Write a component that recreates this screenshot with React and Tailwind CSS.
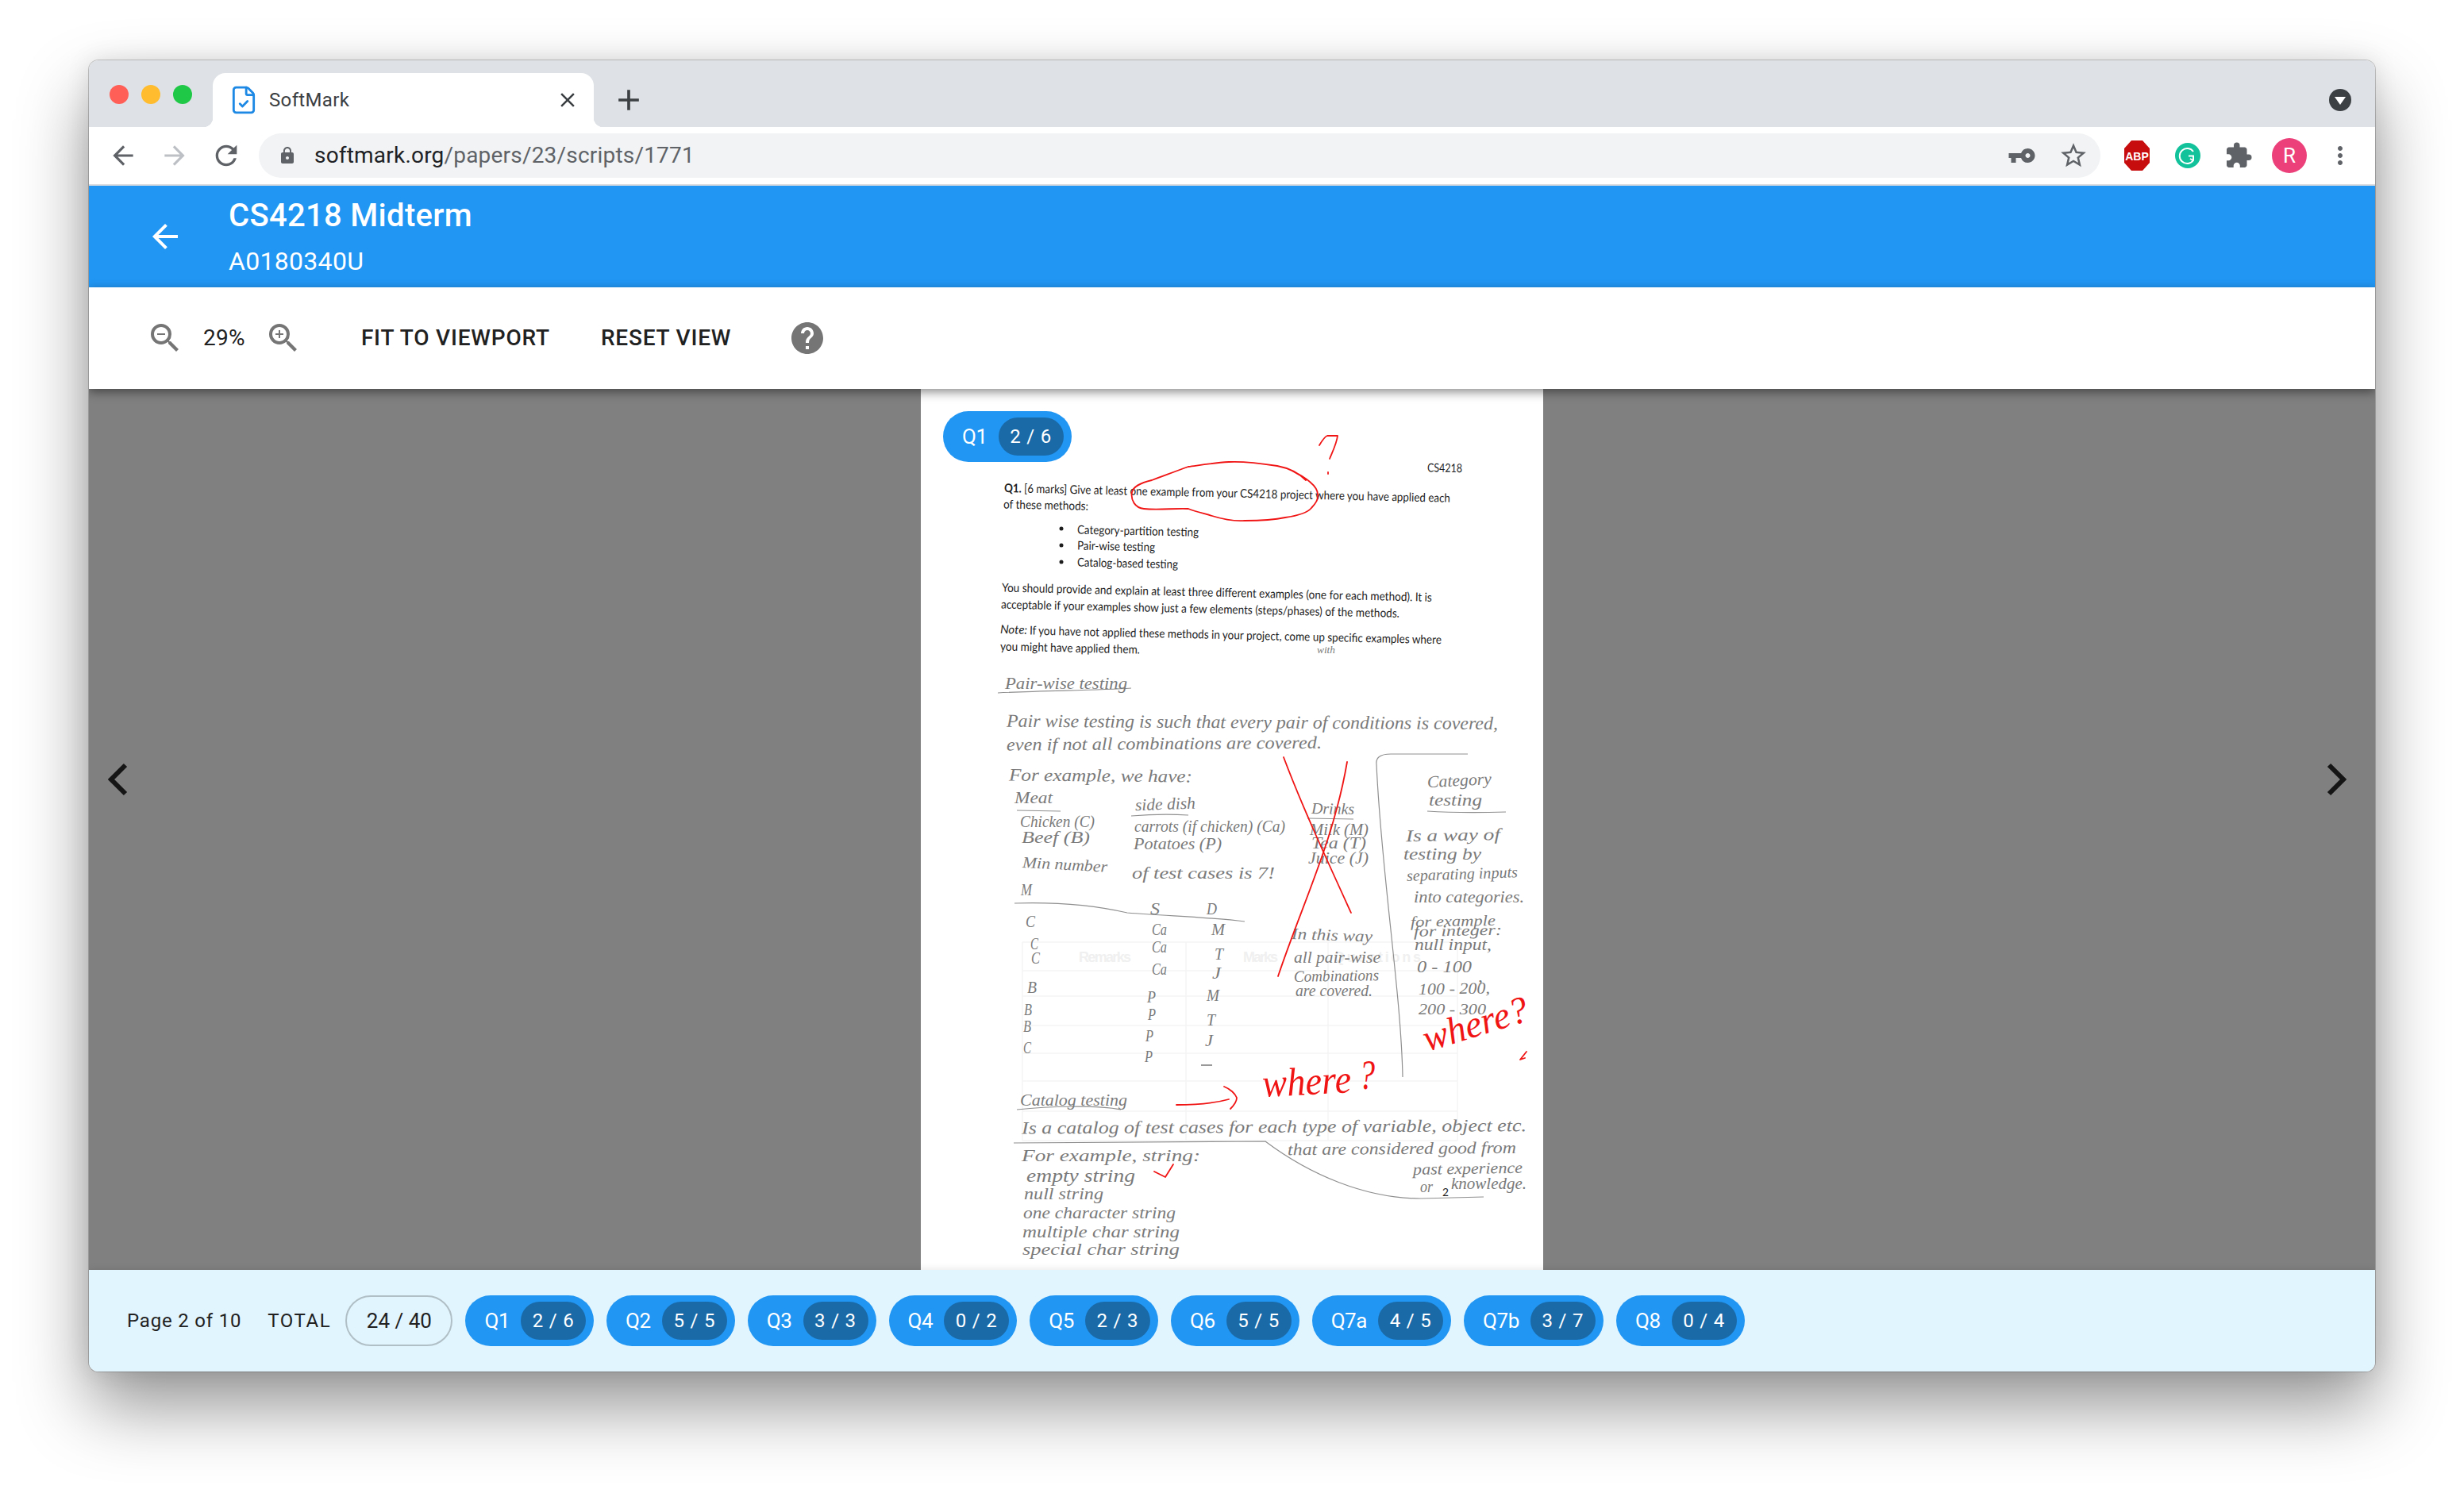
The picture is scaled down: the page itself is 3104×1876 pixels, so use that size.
import { FileCheck } from "lucide-react";
import {
  MdAdd,
  MdArrowBack,
  MdArrowForward,
  MdClose,
  MdExtension,
  MdHelp,
  MdLock,
  MdMoreVert,
  MdRefresh,
  MdStarBorder,
  MdVpnKey,
  MdZoomIn,
  MdZoomOut,
} from "react-icons/md";

const questions = [
  ["Q1", "2 / 6"],
  ["Q2", "5 / 5"],
  ["Q3", "3 / 3"],
  ["Q4", "0 / 2"],
  ["Q5", "2 / 3"],
  ["Q6", "5 / 5"],
  ["Q7a", "4 / 5"],
  ["Q7b", "3 / 7"],
  ["Q8", "0 / 4"],
];

// printed lines of the scan: text, x1, x2, y centre, size, slope
const printed = [
  ["CS4218", 1798, 1842, 590, 15, 0.8],
  ["of these methods:", 1264, 1371, 636, 15, 1.2],
  ["Category-partition testing", 1357, 1510, 668, 15, 1.2],
  ["Pair-wise testing", 1357, 1455, 688, 15, 1.2],
  ["Catalog-based testing", 1357, 1484, 709, 15, 1.2],
  ["You should provide and explain at least three different examples (one for each method). It is", 1262, 1804, 741, 15, 1.3],
  ["acceptable if your examples show just a few elements (steps/phases) of the methods.", 1261, 1763, 762, 15, 1.3],
  ["If you have not applied these methods in your project, come up specific examples where", 1297, 1816, 795, 15, 1.3],
  ["you might have applied them.", 1260, 1436, 815, 15, 1.3],
  ["2", 1817, 1825, 1503, 14, 0],
];

// handwriting of the scan: text, x1, x2, y centre, size, slope
const written = [
  ["with", 1659, 1682, 820, 12, 0],
  ["Pair-wise testing", 1266, 1420, 863, 21, 0],
  ["Pair wise testing is such that every pair of conditions is covered,", 1268, 1887, 910, 23, 0.3],
  ["even if not all combinations are covered.", 1268, 1665, 940, 22, -0.4],
  ["For example, we have:", 1271, 1502, 978, 22, 0.5],
  ["Meat", 1278, 1326, 1007, 21, 0],
  ["side dish", 1430, 1506, 1016, 21, -2],
  ["Drinks", 1652, 1706, 1020, 20, 1],
  ["Chicken (C)", 1285, 1379, 1037, 21, 0],
  ["Beef (B)", 1287, 1373, 1057, 21, 0],
  ["carrots (if chicken) (Ca)", 1429, 1619, 1043, 20, 0],
  ["Potatoes (P)", 1428, 1539, 1065, 20, 0],
  ["Milk (M)", 1650, 1724, 1047, 20, 0],
  ["Tea (T)", 1652, 1721, 1064, 20, 0],
  ["Juice (J)", 1648, 1724, 1083, 20, 0],
  ["Min number", 1288, 1395, 1088, 20, 3],
  ["of test cases is 7!", 1426, 1606, 1102, 21, 0],
  ["M", 1286, 1300, 1123, 20, 0],
  ["S", 1449, 1461, 1147, 20, 0],
  ["D", 1520, 1533, 1147, 20, 0],
  ["C", 1292, 1304, 1162, 22, 0],
  ["Ca", 1451, 1470, 1173, 20, 0],
  ["M", 1526, 1543, 1173, 20, 0],
  ["C", 1298, 1308, 1190, 22, 0],
  ["Ca", 1451, 1470, 1195, 20, 0],
  ["T", 1530, 1541, 1204, 20, 0],
  ["C", 1299, 1310, 1208, 22, 0],
  ["Ca", 1451, 1470, 1223, 20, 0],
  ["J", 1527, 1538, 1228, 20, 0],
  ["B", 1294, 1306, 1245, 22, 0],
  ["P", 1445, 1456, 1257, 22, 0],
  ["M", 1520, 1536, 1256, 20, 0],
  ["B", 1290, 1300, 1273, 22, 0],
  ["P", 1446, 1456, 1280, 20, 0],
  ["T", 1520, 1531, 1287, 20, 0],
  ["B", 1289, 1299, 1295, 20, 0],
  ["P", 1443, 1453, 1307, 20, 0],
  ["J", 1518, 1528, 1313, 20, 0],
  ["C", 1289, 1299, 1322, 20, 0],
  ["P", 1442, 1452, 1332, 22, 0],
  ["In this way", 1627, 1729, 1178, 20, 2],
  ["all pair-wise", 1630, 1739, 1208, 20, 0],
  ["Combinations", 1630, 1737, 1232, 20, -1],
  ["are covered.", 1632, 1729, 1250, 20, 0],
  ["Category", 1798, 1879, 987, 21, -3],
  ["testing", 1800, 1867, 1010, 21, 0],
  ["Is a way of", 1771, 1890, 1055, 21, -1],
  ["testing by", 1768, 1866, 1078, 21, 0],
  ["separating inputs", 1772, 1912, 1105, 20, -2],
  ["into categories.", 1781, 1920, 1132, 20, 0],
  ["for example", 1777, 1884, 1163, 19, -1],
  ["for integer:", 1781, 1892, 1175, 19, -1],
  ["null input,", 1782, 1879, 1192, 20, 0],
  ["0 - 100", 1785, 1854, 1220, 20, 0],
  [",", 1862, 1868, 1232, 20, 0],
  ["100 - 200,", 1787, 1877, 1248, 20, -1],
  ["200 - 300", 1787, 1872, 1273, 19, 0],
  ["Catalog testing", 1285, 1420, 1388, 21, 0],
  ["Is a catalog of test cases for each type of variable, object etc.", 1287, 1923, 1423, 22, -0.3],
  ["that are considered good from", 1622, 1910, 1450, 21, -0.5],
  ["past experience", 1780, 1918, 1475, 20, -1],
  ["or", 1789, 1805, 1497, 20, 0],
  ["knowledge.", 1828, 1923, 1493, 20, 0],
  ["For example, string:", 1287, 1512, 1457, 22, 0],
  ["empty string", 1293, 1430, 1483, 23, 0],
  ["null string", 1290, 1390, 1505, 22, 0],
  ["one character string", 1289, 1481, 1529, 22, 0],
  ["multiple char string", 1288, 1486, 1553, 22, 0],
  ["special char string", 1288, 1486, 1575, 22, 0],
];

// pencil lines: underlines and the rules the student drew between answers
const pencil = [
  "M1257 873 C1310 870 1380 870 1425 867",
  "M1281 1021 L1336 1022",
  "M1425 1028 C1450 1026 1480 1026 1497 1027",
  "M1647 1031 L1705 1032",
  "M1278 1138 C1340 1136 1385 1142 1420 1150 C1470 1154 1530 1156 1568 1161",
  "M1798 1022 C1830 1024 1860 1024 1897 1023",
  "M1734 963 C1733 955 1738 950 1752 950 L1849 950",
  "M1734 963 C1740 1100 1765 1250 1767 1357",
  "M1281 1398 C1320 1394 1380 1392 1412 1398",
  "M1277 1440 L1594 1438 C1650 1480 1720 1510 1790 1510 L1869 1508",
];

const red = "#f01414";

function Printed({ line }) {
  const [text, x1, x2, y, size, slope] = line;
  return (
    <text
      x={x1}
      y={y + size * 0.3}
      fontFamily="Lato, sans-serif"
      fontSize={size}
      fill="#1d1d1d"
      textLength={x2 - x1}
      lengthAdjust="spacingAndGlyphs"
      transform={`rotate(${slope} ${x1} ${y})`}
    >
      {text}
    </text>
  );
}

function Written({ line }) {
  const [text, x1, x2, y, size, slope] = line;
  return (
    <text
      x={x1}
      y={y + size * 0.25}
      fontFamily="Liberation Serif, serif"
      fontStyle="italic"
      fontSize={size}
      fill="#7a7a7a"
      textLength={x2 - x1}
      lengthAdjust="spacingAndGlyphs"
      transform={`rotate(${slope} ${x1} ${y})`}
    >
      {text}
    </text>
  );
}

// the scanned page is a picture in the reference, so it is one svg
function ScanPage() {
  return (
    <svg viewBox="1160 490 784 1110" className="block w-[784px] h-[1110px]">
      <rect x="1160" y="490" width="784" height="1110" fill="#ffffff" />

      {/* the cover page's table showing through the paper */}
      <g stroke="#f5f5f5" strokeWidth="1.5" fill="none">
        <path d="M1288 1187 H1836 M1288 1223 H1836 M1288 1255 H1836 M1288 1292 H1836 M1288 1327 H1836 M1288 1362 H1836 M1288 1400 H1836 M1288 1437 H1836" />
        <path d="M1288 1187 V1437 M1494 1187 V1437 M1673 1187 V1437 M1836 1187 V1437" />
      </g>
      <g fontFamily="Liberation Sans, sans-serif" fontWeight="700" fontSize="18" fill="#f0f0f0">
        <text x="1359" y="1212" textLength="66">Remarks</text>
        <text x="1566" y="1212" textLength="44">Marks</text>
        <text x="1680" y="1212" textLength="110">Questions</text>
      </g>

      {printed.map((line) => (
        <Printed key={line[0]} line={line} />
      ))}
      <text
        x="1265"
        y="620"
        fontFamily="Lato, sans-serif"
        fontSize="15"
        fill="#1d1d1d"
        textLength="562"
        lengthAdjust="spacingAndGlyphs"
        transform="rotate(1.3 1265 616)"
      >
        <tspan fontWeight="700">Q1.</tspan> [6 marks] Give at least one example from your CS4218 project where you have applied each
      </text>
      <text x="1260" y="798" fontFamily="Lato, sans-serif" fontStyle="italic" fontSize="15" fill="#1d1d1d" transform="rotate(1.3 1260 794)">
        Note:
      </text>
      <circle cx="1337" cy="666" r="2.5" fill="#1d1d1d" />
      <circle cx="1337" cy="687" r="2.5" fill="#1d1d1d" />
      <circle cx="1337" cy="708" r="2.5" fill="#1d1d1d" />

      <g stroke="#8f8f8f" strokeWidth="1.2" fill="none">
        {pencil.map((d) => (
          <path key={d} d={d} />
        ))}
      </g>
      {written.map((line, i) => (
        <Written key={i} line={line} />
      ))}
      <path d="M1513 1342 H1527" stroke="#777777" strokeWidth="1.5" />

      {/* red marker */}
      <g stroke={red} strokeWidth="1.8" fill="none" strokeLinecap="round" strokeLinejoin="round">
        <path d="M1645 605 C1638 598 1625 590 1609 587 C1590 584 1570 581 1548 582 C1530 583 1512 586 1497 588 C1480 594 1465 600 1451 605 C1438 608 1428 612 1426 620 C1424 630 1430 640 1441 641 C1460 643 1480 640 1497 641 C1508 645 1517 647 1527 650 C1540 654 1555 657 1568 656 C1585 656 1605 655 1619 652 C1633 650 1647 646 1652 640 C1658 634 1661 628 1660 623 C1660 617 1656 612 1650 607 C1643 601 1636 597 1629 594" />
        <path d="M1662 561 C1665 556 1669 550 1672 549 L1685 549 C1684 558 1680 566 1675 578" />
        <path d="M1673 595 L1673 597" />
        <path d="M1617 954 C1640 1015 1670 1080 1702 1150" />
        <path d="M1697 960 C1680 1060 1640 1140 1610 1230" />
        <path d="M1482 1392 C1505 1392 1530 1390 1548 1385" />
        <path d="M1542 1369 C1550 1372 1556 1378 1558 1383 C1558 1388 1554 1393 1550 1397" />
        <path d="M1454 1476 L1468 1483 L1478 1467" />
        <path d="M1915 1335 L1923 1325 M1915 1335 L1921 1333" />
      </g>
      <g fontFamily="Liberation Serif, serif" fontStyle="italic" fill={red}>
        <text x="1591" y="1382" fontSize="50" textLength="112" lengthAdjust="spacingAndGlyphs" transform="rotate(-3 1591 1382)">
          where
        </text>
        <text x="1712" y="1372" fontSize="52" textLength="20" lengthAdjust="spacingAndGlyphs">
          ?
        </text>
        <text x="1798" y="1325" fontSize="48" textLength="136" lengthAdjust="spacingAndGlyphs" transform="rotate(-17 1798 1325)">
          where?
        </text>
      </g>
    </svg>
  );
}

function ScoreChip({ label, score }) {
  return (
    <div className="flex h-[64px] shrink-0 items-center gap-[14px] rounded-full bg-[#2196f3] pl-[24px] pr-[10px] text-white">
      <span className="text-[26px] leading-none tracking-[-0.4px]">{label}</span>
      <span className="flex h-[48px] w-[82px] items-center justify-center rounded-full bg-[#1a6aa8] text-[24px] leading-none tracking-[0.8px]">
        {score}
      </span>
    </div>
  );
}

export default function App() {
  return (
    <div className="h-[1876px] w-[3104px] overflow-hidden bg-white pl-[112px] pt-[76px] font-['Roboto',sans-serif]">
      <div className="flex h-[1652px] w-[2880px] flex-col overflow-hidden rounded-[12px] shadow-[0_0_0_1px_rgba(0,0,0,0.2),0_44px_88px_rgba(0,0,0,0.42),0_0_30px_rgba(0,0,0,0.1)]">
        {/* tab strip */}
        <div className="flex h-[84px] shrink-0 bg-[#dee1e6]">
          <div className="ml-[26px] mt-[31px] flex h-[24px] gap-[16px]">
            <span className="h-[24px] w-[24px] rounded-full bg-[#ff5f57]" />
            <span className="h-[24px] w-[24px] rounded-full bg-[#febc2e]" />
            <span className="h-[24px] w-[24px] rounded-full bg-[#1fc846]" />
          </div>
          <div className="relative ml-[26px] mt-[16px] flex h-[68px] w-[480px] items-center rounded-t-[16px] bg-white pl-[20px] pr-[18px]">
            <span className="absolute bottom-0 left-[-12px] h-[12px] w-[12px] bg-[radial-gradient(circle_at_0_0,#dee1e6_12px,#ffffff_12.5px)]" />
            <span className="absolute bottom-0 right-[-12px] h-[12px] w-[12px] bg-[radial-gradient(circle_at_100%_0,#dee1e6_12px,#ffffff_12.5px)]" />
            <FileCheck size={38} strokeWidth={1.8} className="text-[#1e88e5]" />
            <span className="ml-[13px] text-[24px] tracking-[0.35px] text-[#3c4043]">SoftMark</span>
            <MdClose size={30} className="ml-auto text-[#3c4043]" />
          </div>
          <MdAdd size={44} className="ml-[22px] mt-[28px] text-[#3c4043]" />
          <div className="ml-auto mr-[30px] mt-[36px] flex h-[28px] w-[28px] items-center justify-center rounded-full bg-[#3c4043]">
            <span className="mt-[2px] h-0 w-0 border-x-[7px] border-t-[10px] border-x-transparent border-t-white" />
          </div>
        </div>

        {/* address bar */}
        <div className="flex h-[74px] shrink-0 items-center border-b-2 border-[#dadce0] bg-white">
          <MdArrowBack size={38} className="ml-[24px] text-[#5f6368]" />
          <MdArrowForward size={38} className="ml-[27px] text-[#bdc1c6]" />
          <MdRefresh size={40} className="ml-[26px] text-[#5f6368]" />
          <div className="ml-[21px] flex h-[56px] w-[2320px] items-center rounded-full bg-[#f1f3f4] pl-[24px] pr-[15px] text-[28px] tracking-[0.2px]">
            <MdLock size={24} className="text-[#5f6368]" />
            <span className="ml-[22px] text-[#202124]">softmark.org</span>
            <span className="text-[#5f6368]">/papers/23/scripts/1771</span>
            <MdVpnKey size={36} className="ml-auto -scale-x-100 text-[#5f6368]" />
            <MdStarBorder size={38} className="ml-[28px] text-[#5f6368]" />
          </div>
          <svg viewBox="0 0 32 38" className="ml-[30px] h-[38px] w-[32px]">
            <polygon points="9,0 23,0 32,10 32,28 23,38 9,38 0,28 0,10" fill="#c70d0d" />
            <text x="16" y="25" textAnchor="middle" fontFamily="Liberation Sans, sans-serif" fontWeight="700" fontSize="14" fill="#fff">
              ABP
            </text>
          </svg>
          <svg viewBox="0 0 32 32" className="ml-[32px] h-[34px] w-[32px]">
            <circle cx="16" cy="16" r="16" fill="#11c29b" />
            <path d="M23 11 A9.5 9.5 0 1 0 23 22 L23 16.5 L17 16.5 M19 20 L23.5 22.5" stroke="#fff" strokeWidth="2" fill="none" />
          </svg>
          <MdExtension size={36} className="ml-[30px] text-[#5f6368]" />
          <div className="ml-[24px] flex h-[44px] w-[44px] items-center justify-center rounded-full bg-[#ec407a] text-[26px] text-white">R</div>
          <MdMoreVert size={36} className="ml-[24px] text-[#5f6368]" />
        </div>

        {/* app bar */}
        <div className="flex h-[128px] shrink-0 items-center bg-[#2196f3] pl-[72px] text-white">
          <MdArrowBack size={48} />
          <div className="ml-[56px] flex flex-col">
            <span className="text-[40px] font-medium leading-[50px] tracking-[0.3px]">CS4218 Midterm</span>
            <span className="mt-[12px] text-[32px] leading-[40px] tracking-[0.3px]">A0180340U</span>
          </div>
        </div>

        {/* zoom toolbar */}
        <div className="relative z-10 flex h-[128px] shrink-0 items-center bg-white pl-[72px] text-[#212121] shadow-[0_4px_12px_rgba(0,0,0,0.45)]">
          <MdZoomOut size={48} className="text-[#757575]" />
          <span className="ml-[24px] text-[28px] tracking-[0.3px]">29%</span>
          <MdZoomIn size={48} className="ml-[24px] text-[#757575]" />
          <span className="ml-[74px] text-[28px] font-medium tracking-[0.8px]">FIT TO VIEWPORT</span>
          <span className="ml-[64px] text-[28px] font-medium tracking-[0.8px]">RESET VIEW</span>
          <MdHelp size={48} className="ml-[72px] text-[#757575]" />
        </div>

        {/* canvas */}
        <div className="relative flex flex-1 justify-center overflow-hidden bg-[#808080]">
          <div className="relative h-[1110px] w-[784px]">
            <ScanPage />
            <div className="absolute left-[28px] top-[28px]">
              <ScoreChip label="Q1" score="2 / 6" />
            </div>
          </div>
          <svg viewBox="0 0 26 44" fill="none" stroke="#151515" strokeWidth="6" className="absolute left-[24px] top-[470px] h-[44px] w-[26px]">
            <path d="M22 4 L4 22 L22 40" />
          </svg>
          <svg viewBox="0 0 26 44" fill="none" stroke="#151515" strokeWidth="6" className="absolute right-[36px] top-[470px] h-[44px] w-[26px]">
            <path d="M4 4 L22 22 L4 40" />
          </svg>
        </div>

        {/* score bar */}
        <div className="relative z-10 flex h-[128px] shrink-0 items-center bg-[#e1f5fe] pl-[48px] text-[#212121] shadow-[0_-2px_8px_rgba(0,0,0,0.08)]">
          <span className="text-[24px] tracking-[0.8px]">Page 2 of 10</span>
          <span className="ml-[33px] text-[24px] tracking-[1.6px]">TOTAL</span>
          <div className="ml-[18px] flex h-[64px] w-[135px] items-center justify-center rounded-full border-2 border-[#b0bec5] text-[26px]">
            24 / 40
          </div>
          <div className="ml-[16px] flex gap-[16px]">
            {questions.map(([label, score]) => (
              <ScoreChip key={label} label={label} score={score} />
            ))}
          </div>
        </div>
      </div>
    </div>
  );
}
